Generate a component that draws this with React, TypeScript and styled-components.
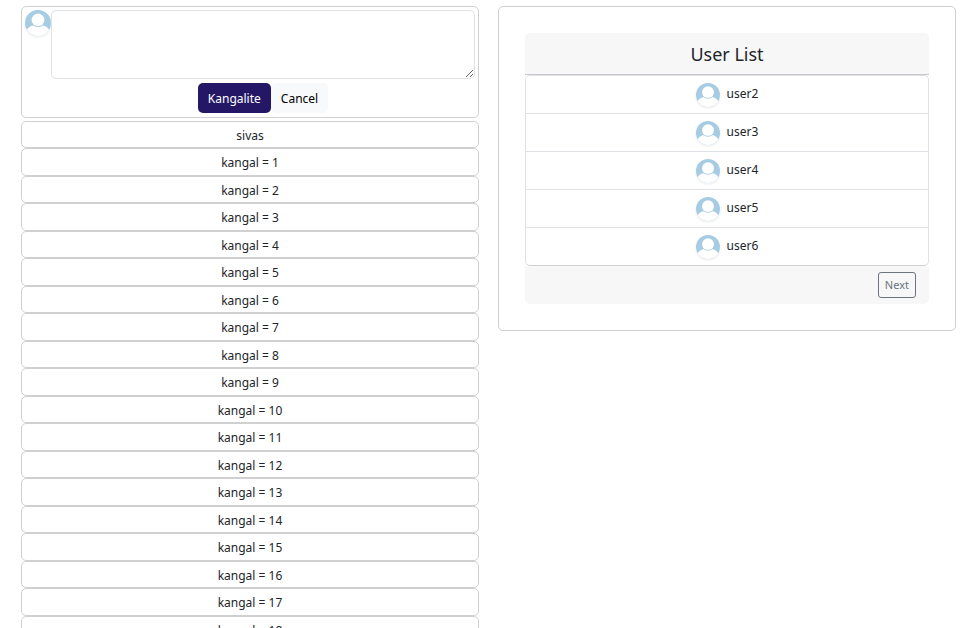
import React, { useState } from "react";
import styled, { createGlobalStyle } from "styled-components";

const GlobalStyle = createGlobalStyle`
  *, *::before, *::after { box-sizing: border-box; }
  body {
    margin: 0;
    background: #fff;
    color: #212529;
    font: 12px/20px "Segoe UI", "Noto Sans", sans-serif;
  }
`;

const Page = styled.main`
  display: grid;
  grid-template-columns: 1fr 1fr;
  align-items: start;
  gap: 19px;
  height: 100vh;
  padding: 6px 14px 0 21px;
  overflow-y: auto;
  scrollbar-width: none;
`;

const Card = styled.section`
  border: 1px solid #d0d0d0;
  border-radius: 5px;
  background: #fff;
`;

const Composer = styled(Card).attrs({ as: "form" })`
  display: flex;
  align-items: flex-start;
  margin-bottom: 3px;
  padding: 3px 3px 4px;
`;

const ComposerBody = styled.div`
  flex: 1;
`;

const Message = styled.textarea`
  display: block;
  width: 100%;
  height: 69px;
  padding: 5px 10px;
  border: 1px solid #dee2e6;
  border-radius: 5px;
  font: inherit;
  color: inherit;
  resize: vertical;
`;

const Actions = styled.div`
  display: flex;
  justify-content: center;
  margin-top: 4px;
`;

const Button = styled.button<{ $primary?: boolean }>`
  height: 30px;
  padding: 2px 10px 0;
  border: 0;
  border-radius: 5px;
  background: ${(p) => (p.$primary ? "#241866" : "#f8f9fa")};
  color: ${(p) => (p.$primary ? "#fff" : "#000")};
  font: inherit;
`;

const Post = styled(Card).attrs({ as: "article" })`
  padding: 4px 3px 1px;
  text-align: center;

  &:nth-of-type(even) { padding-bottom: 2px; }
`;

const Panel = styled(Card)`
  padding: 26px;
`;

const PanelTitle = styled.h2`
  margin: 0;
  height: 42px;
  border-bottom: 1px solid #c8c8c8;
  border-radius: 5px 5px 0 0;
  background: #f7f7f7;
  font-size: 18px;
  font-weight: 400;
  line-height: 42px;
  text-align: center;
`;

const Users = styled.ul`
  margin: 0;
  padding: 0;
  border: 1px solid #dee2e6;
  border-bottom-color: #d0d1d3;
  border-radius: 5px;
  list-style: none;
`;

const UserRow = styled.li`
  & + & { border-top: 1px solid #dee2e6; }
`;

const UserLink = styled.a`
  display: flex;
  align-items: center;
  justify-content: center;
  gap: 7px;
  height: 37px;
  color: inherit;
  text-decoration: none;
`;

const UserName = styled.span`
  padding-bottom: 2px;
`;

const PanelFooter = styled.footer`
  display: flex;
  justify-content: flex-end;
  padding: 6px 13px;
  border-radius: 0 0 5px 5px;
  background: #f7f7f7;
`;

const NextButton = styled.button`
  height: 26px;
  padding: 0 6px;
  border: 1px solid #6c757d;
  border-radius: 3px;
  background: transparent;
  color: #6c757d;
  font: 11px/16px "Segoe UI", "Noto Sans", sans-serif;
`;

const AvatarImage = styled.svg`
  flex: none;
  display: block;
  overflow: hidden;
  border-radius: 50%;
  box-shadow: 0 1px 3px rgba(0, 0, 0, 0.09);
`;

function Avatar({ size }: { size: number }) {
  return (
    <AvatarImage width={size} height={size} viewBox="0 0 26 26" aria-hidden="true">
      <path d="M0 0H26V26H0Z" fill="#a6cce3" />
      <path d="M0 26V24C2 18.2 4.6 15.4 9 15.4c2.5 1.2 5.5 1.2 8 0 4.4 0 7 2.8 9 8.6V26Z" fill="#fff" />
      <circle cx="13" cy="10" r="6.4" fill="#fff" />
      <path d="M9 15.6c2.5 1.3 5.5 1.3 8 0" fill="none" stroke="#a6cce3" strokeWidth="0.9" />
    </AvatarImage>
  );
}

const posts = ["sivas", ...Array.from({ length: 18 }, (_, i) => `kangal = ${i + 1}`)];
const users = ["user2", "user3", "user4", "user5", "user6"];

export default function App() {
  const [text, setText] = useState("");
  return (
    <>
      <GlobalStyle />
      <Page>
        <div>
          <Composer onSubmit={(e: React.FormEvent) => e.preventDefault()}>
            <Avatar size={26} />
            <ComposerBody>
              <Message aria-label="Message" value={text} onChange={(e) => setText(e.target.value)} />
              <Actions>
                <Button type="submit" $primary>Kangalite</Button>
                <Button type="button" onClick={() => setText("")}>Cancel</Button>
              </Actions>
            </ComposerBody>
          </Composer>
          {posts.map((post) => (
            <Post key={post}>{post}</Post>
          ))}
        </div>
        <Panel>
          <PanelTitle>User List</PanelTitle>
          <Users>
            {users.map((user) => (
              <UserRow key={user}>
                <UserLink href={`#${user}`}>
                  <Avatar size={24} />
                  <UserName>{user}</UserName>
                </UserLink>
              </UserRow>
            ))}
          </Users>
          <PanelFooter>
            <NextButton type="button">Next</NextButton>
          </PanelFooter>
        </Panel>
      </Page>
    </>
  );
}
